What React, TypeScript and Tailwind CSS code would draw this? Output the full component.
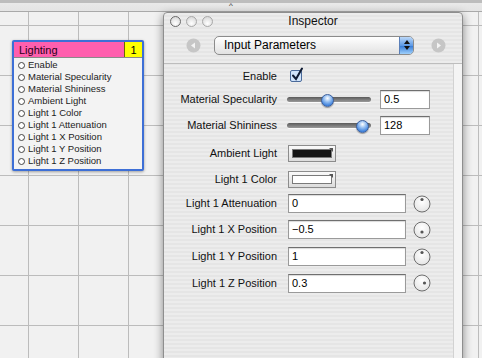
import React from 'react';

const font = "font-['Lucida_Grande','Liberation_Sans',sans-serif]";

const patchInputs = [
  'Enable',
  'Material Specularity',
  'Material Shininess',
  'Ambient Light',
  'Light 1 Color',
  'Light 1 Attenuation',
  'Light 1 X Position',
  'Light 1 Y Position',
  'Light 1 Z Position',
];

const Label = ({ children }: { children: React.ReactNode }) => (
  <div className="w-[113px] shrink-0 text-right text-[11px] text-[#111]">{children}</div>
);

const TextField = ({ value, wide }: { value: string; wide?: boolean }) => (
  <div
    className={
      (wide ? 'w-[118px] ' : 'w-[50px] ') +
      'h-[19px] bg-white border border-[#9a9a9a] border-t-[#6f6f6f] shadow-[inset_0_1px_1px_rgba(0,0,0,0.15)] pl-[3px] flex items-center text-[11px] text-black'
    }
  >
    {value}
  </div>
);

const Slider = ({ pos }: { pos: number }) => (
  <div className="relative ml-[10px] w-[84px] h-[14px] flex items-center">
    <div className="w-full h-[5px] rounded-full bg-[linear-gradient(to_bottom,#5a5a5a,#9a9a9a)] shadow-[0_1px_0_rgba(255,255,255,0.8)]" />
    <div
      className="absolute top-[1px] w-[13px] h-[13px] rounded-full border border-[#3d5f9c] bg-[radial-gradient(circle_at_50%_30%,#ffffff_0%,#9cc3f2_35%,#3f82dc_75%,#6aa8ee_100%)] shadow-[0_1px_1px_rgba(0,0,0,0.35)]"
      style={{ left: pos - 6 }}
    />
  </div>
);

const ColorWell = ({ color }: { color: string }) => (
  <div className="relative w-[48px] h-[17px] border border-[#8c8c8c] bg-[linear-gradient(to_bottom,#fafafa,#dcdcdc)] p-[3px]">
    <div className="w-full h-full border border-[#7a7a7a]" style={{ backgroundColor: color }} />
    <svg className="absolute right-[2px] top-[2px]" width="4" height="4" viewBox="0 0 4 4">
      <path d="M0 0 H4 V4 Z" fill="#555" />
    </svg>
  </div>
);

const Knob = ({ dx, dy }: { dx: number; dy: number }) => (
  <svg className="ml-[7px]" width="18" height="18" viewBox="0 0 18 18">
    <defs>
      <radialGradient id="kg" cx="50%" cy="35%" r="65%">
        <stop offset="0%" stopColor="#ffffff" />
        <stop offset="100%" stopColor="#e4e4e4" />
      </radialGradient>
    </defs>
    <circle cx="9" cy="9" r="8" fill="url(#kg)" stroke="#6e6e6e" strokeWidth="1" />
    <circle cx={9 + dx} cy={9 + dy} r="1.6" fill="#555" />
  </svg>
);

const NavArrow = ({ dir }: { dir: 'l' | 'r' }) => (
  <svg width="15" height="15" viewBox="0 0 15 15">
    <circle cx="7.5" cy="7.5" r="7" fill="#c6c6c6" />
    {dir === 'l' ? <path d="M9 4.5 L5 7.5 L9 10.5 Z" fill="#f4f4f4" /> : <path d="M6 4.5 L10 7.5 L6 10.5 Z" fill="#f4f4f4" />}
  </svg>
);

export default function App() {
  return (
    <div className={`relative w-[482px] h-[358px] overflow-hidden bg-[#f0f0f0] ${font}`}>
      {/* top strip */}
      <div className="h-[12px] border-b border-[#a9a9a9] bg-[linear-gradient(to_bottom,#bdbdbd_0px,#bdbdbd_3px,#e9e9e9_3px,#e4e4e4_100%)] relative">
        <div className="absolute left-[229px] top-[2px] text-[8px] leading-none text-[#222]">^</div>
      </div>
      {/* canvas grid */}
      <div className="h-[346px] bg-[#f1f1f1] bg-[linear-gradient(to_right,#bcbcbc_1px,transparent_1px),linear-gradient(to_bottom,#bcbcbc_1px,transparent_1px)] bg-[size:50px_50px] bg-[position:28px_13px]" />

      {/* Lighting patch */}
      <div className="absolute left-[12px] top-[40px] w-[132px] h-[131px] border-2 border-[#3d6fd6] rounded-[2px] bg-[#f3f3f3] shadow-[0_1px_3px_rgba(0,0,0,0.35)] flex flex-col">
        <div className="flex h-[16px] border-b border-[#8a8a8a]">
          <div className="flex-1 bg-[#ff5fae] pl-[5px] text-[11px] leading-[16px] text-[#2a0016]">Lighting</div>
          <div className="w-[18px] bg-[#ffff00] border-l border-[#6b6b00] text-center text-[11px] leading-[16px] text-black">1</div>
        </div>
        <div className="flex flex-col pt-[1px]">
          {patchInputs.map((n) => (
            <div key={n} className="flex items-center h-[12px] pl-[4px] gap-[3px] text-[9.5px] text-[#222]">
              <span className="w-[7px] h-[7px] rounded-full border border-[#444] bg-white" />
              {n}
            </div>
          ))}
        </div>
      </div>

      {/* Inspector window */}
      <div className="absolute left-[163px] top-[12px] w-[300px] h-[352px] flex flex-col border border-[#8e8e8e] rounded-t-[4px] bg-[repeating-linear-gradient(to_bottom,#ececec_0px,#ececec_2px,#e5e5e5_2px,#e5e5e5_4px)] shadow-[0_3px_10px_rgba(0,0,0,0.45)]">
        {/* title bar */}
        <div className="relative h-[16px] flex items-center pl-[6px] gap-[5px]">
          {[0, 1, 2].map((i) => (
            <div
              key={i}
              className={
                (i === 0 ? 'border-[#6a6a6a] ' : 'border-[#a8a8a8] ') +
                'w-[11px] h-[11px] rounded-full border bg-[radial-gradient(circle_at_50%_70%,#ffffff,#d0d0d0)]'
              }
            />
          ))}
          <div className="absolute inset-0 flex items-center justify-center text-[12px] text-[#111]">Inspector</div>
        </div>
        {/* toolbar */}
        <div className="h-[34px] flex items-center pl-[22px] pb-[2px]">
          <NavArrow dir="l" />
          <div className="ml-[13px] w-[200px] h-[19px] rounded-[5px] border border-[#8b8b8b] bg-[linear-gradient(to_bottom,#ffffff,#f0f0f0_50%,#e2e2e2)] flex items-center overflow-hidden">
            <div className="flex-1 pl-[9px] text-[12px] text-black">Input Parameters</div>
            <div className="w-[14px] h-full bg-[linear-gradient(to_bottom,#bcd8f8,#5d9ae6_50%,#3a7fd9_55%,#9fd0fb)] border-l border-[#5a7fb8] flex flex-col items-center justify-center gap-[2px]">
              <svg width="6" height="4" viewBox="0 0 6 4"><path d="M0 4 L3 0 L6 4 Z" fill="#111" /></svg>
              <svg width="6" height="4" viewBox="0 0 6 4"><path d="M0 0 L3 4 L6 0 Z" fill="#111" /></svg>
            </div>
          </div>
          <div className="ml-[17px]">
            <NavArrow dir="r" />
          </div>
        </div>
        {/* body */}
        <div className="flex-1 flex border-t border-[#bdbdbd]">
          <div className="w-[289px] flex flex-col">
            <div className="h-[24px] flex items-center">
              <Label>Enable</Label>
              <svg className="ml-[12px] -mt-[3px]" width="15" height="15" viewBox="0 0 15 15">
                <rect x="1.5" y="3.5" width="11" height="11" rx="1.5" fill="#cfe3fb" stroke="#4a6a9a" />
                <path d="M4 8.5 L7 12 L13 1.5" fill="none" stroke="#0d1a33" strokeWidth="2" strokeLinecap="round" />
              </svg>
            </div>
            <div className="h-[23px] flex items-center">
              <Label>Material Specularity</Label>
              <Slider pos={40} />
              <div className="ml-[9px]"><TextField value="0.5" /></div>
            </div>
            <div className="h-[29px] flex items-center">
              <Label>Material Shininess</Label>
              <Slider pos={75} />
              <div className="ml-[9px]"><TextField value="128" /></div>
            </div>
            <div className="h-[27px] flex items-center">
              <Label>Ambient Light</Label>
              <div className="ml-[11px]"><ColorWell color="#141414" /></div>
            </div>
            <div className="h-[24px] flex items-center">
              <Label>Light 1 Color</Label>
              <div className="ml-[11px]"><ColorWell color="#ffffff" /></div>
            </div>
            <div className="h-[25px] flex items-center">
              <Label>Light 1 Attenuation</Label>
              <div className="ml-[11px]"><TextField value="0" wide /></div>
              <Knob dx={0} dy={-4.5} />
            </div>
            <div className="h-[27px] flex items-center">
              <Label>Light 1 X Position</Label>
              <div className="ml-[11px]"><TextField value="−0.5" wide /></div>
              <Knob dx={0} dy={2} />
            </div>
            <div className="h-[27px] flex items-center">
              <Label>Light 1 Y Position</Label>
              <div className="ml-[11px]"><TextField value="1" wide /></div>
              <Knob dx={0} dy={-4.5} />
            </div>
            <div className="h-[26px] flex items-center">
              <Label>Light 1 Z Position</Label>
              <div className="ml-[11px]"><TextField value="0.3" wide /></div>
              <Knob dx={2.5} dy={0} />
            </div>
          </div>
          <div className="flex-1 border-l border-[#d2d2d2] bg-[#f4f4f4]" />
        </div>
      </div>
    </div>
  );
}
